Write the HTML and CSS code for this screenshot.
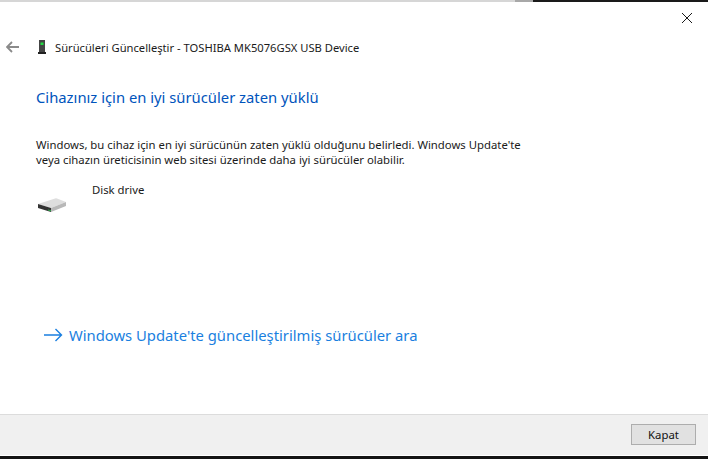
FILE: index.html
```html
<!DOCTYPE html>
<html lang="tr">
<head>
<meta charset="utf-8">
<title>Sürücüleri Güncelleştir</title>
<link rel="stylesheet" href="styles.css">
</head>
<body>
<div class="window">
  <div class="strip"><span class="strip-light"></span><span class="strip-mid"></span><span class="strip-dark"></span></div>
  <div class="closebar">
    <svg class="close" width="12" height="12" viewBox="0 0 12 12"><path d="M1 1l10 10M11 1L1 11" stroke="#1a1a1a" stroke-width="1" fill="none"/></svg>
  </div>
  <div class="header">
    <svg class="back" width="14" height="12" viewBox="0 0 14 12"><path d="M6 1L1 6l5 5M1 6h12" stroke="#8a8a8a" stroke-width="1.8" fill="none"/></svg>
    <svg class="devicon" width="10" height="14" viewBox="0 0 10 14"><path d="M2 0h6v12H2z" fill="#444"/><path d="M1 12h8v2H1z" fill="#222"/><path d="M3.500 2.500h3v2.500h-3z" fill="#22dd44"/></svg>
    <span class="title">Sürücüleri Güncelleştir - TOSHIBA MK5076GSX USB Device</span>
  </div>
  <main class="main">
    <h1 class="heading">Cihazınız için en iyi sürücüler zaten yüklü</h1>
    <p class="desc">Windows, bu cihaz için en iyi sürücünün zaten yüklü olduğunu belirledi. Windows Update'te<br>veya cihazın üreticisinin web sitesi üzerinde daha iyi sürücüler olabilir.</p>
    <div class="device">
      <svg class="disk" width="30" height="16" viewBox="0 0 30 16">
        <path d="M1 7L18 1.500q1-.5 2 0l9 3.500-15 6z" fill="#dedede"/>
        <path d="M1 7l13 4v4L1 11z" fill="#333"/>
        <path d="M14 11l15-6v4l-15 6z" fill="#b8b8b8"/>
        <path d="M11 12.500l3 .8v1l-3-.8z" fill="#2fae4e"/>
      </svg>
      <span class="devname">Disk drive</span>
    </div>
    <a class="link" href="#">
      <svg class="arrow" width="19" height="14" viewBox="0 0 19 14"><path d="M11.500 1l6 6-6 6M0 7h17.500" stroke="#1a7fe0" stroke-width="1.400" fill="none"/></svg>
      <span>Windows Update'te güncelleştirilmiş sürücüler ara</span>
    </a>
  </main>
  <footer class="footer"><button class="btn" type="button">Kapat</button></footer>
  <div class="bottom"></div>
</div>
</body>
</html>
```
FILE: styles.css
```css
* { box-sizing: border-box; }
html, body { margin: 0; padding: 0; }
body { width: 708px; height: 459px; overflow: hidden; background: #fff; font-family: "Noto Sans", "Open Sans", sans-serif; }
.window { width: 708px; height: 459px; display: flex; flex-direction: column; }
.strip { height: 2px; display: flex; flex: none; }
.strip-light { width: 515px; background: #d6d6d6; }
.strip-mid { width: 18px; background: #a8a8a8; }
.strip-dark { flex: 1; background: #1a1a1a; }
.closebar { height: 26px; flex: none; display: flex; justify-content: flex-end; padding: 10px 15px 0 0; }
.close { display: block; }
.header { height: 38px; flex: none; display: flex; align-items: center; padding-left: 6px; }
.back { margin-right: 17px; }
.devicon { margin-right: 8px; }
.title { font-size: 11.200px; color: #1a1a1a; white-space: nowrap; }
.main { flex: 1; padding: 0 0 0 36px; display: flex; flex-direction: column; }
.heading { margin: 20px 0 0; font-size: 14.800px; font-weight: 400; color: #0054bc; line-height: 22px; }
.desc { margin: 29px 0 0; font-size: 11.340px; line-height: 15px; color: #1a1a1a; white-space: nowrap; }
.device { display: flex; align-items: flex-start; margin-top: 15px; height: 36px; }
.disk { margin: 15px 25px 0 1px; }
.devname { font-size: 11.340px; line-height: 15px; color: #1a1a1a; }
.link { margin: 106px 0 0 8px; display: flex; align-items: center; gap: 6px; font-size: 14.800px; line-height: 22px; color: #1a7fe0; text-decoration: none; white-space: nowrap; }
.footer { height: 41px; flex: none; background: #f0f0f0; border-top: 1px solid #dcdcdc; display: flex; justify-content: flex-end; align-items: flex-start; padding: 9px 12px 0 0; }
.btn { width: 65px; height: 21px; padding: 0; background: #e1e1e1; border: 1px solid #adadad; font: 11.340px "Noto Sans", sans-serif; color: #111; }
.bottom { height: 4px; flex: none; background: linear-gradient(#fff 0 1px, #141414 1px); }
```
